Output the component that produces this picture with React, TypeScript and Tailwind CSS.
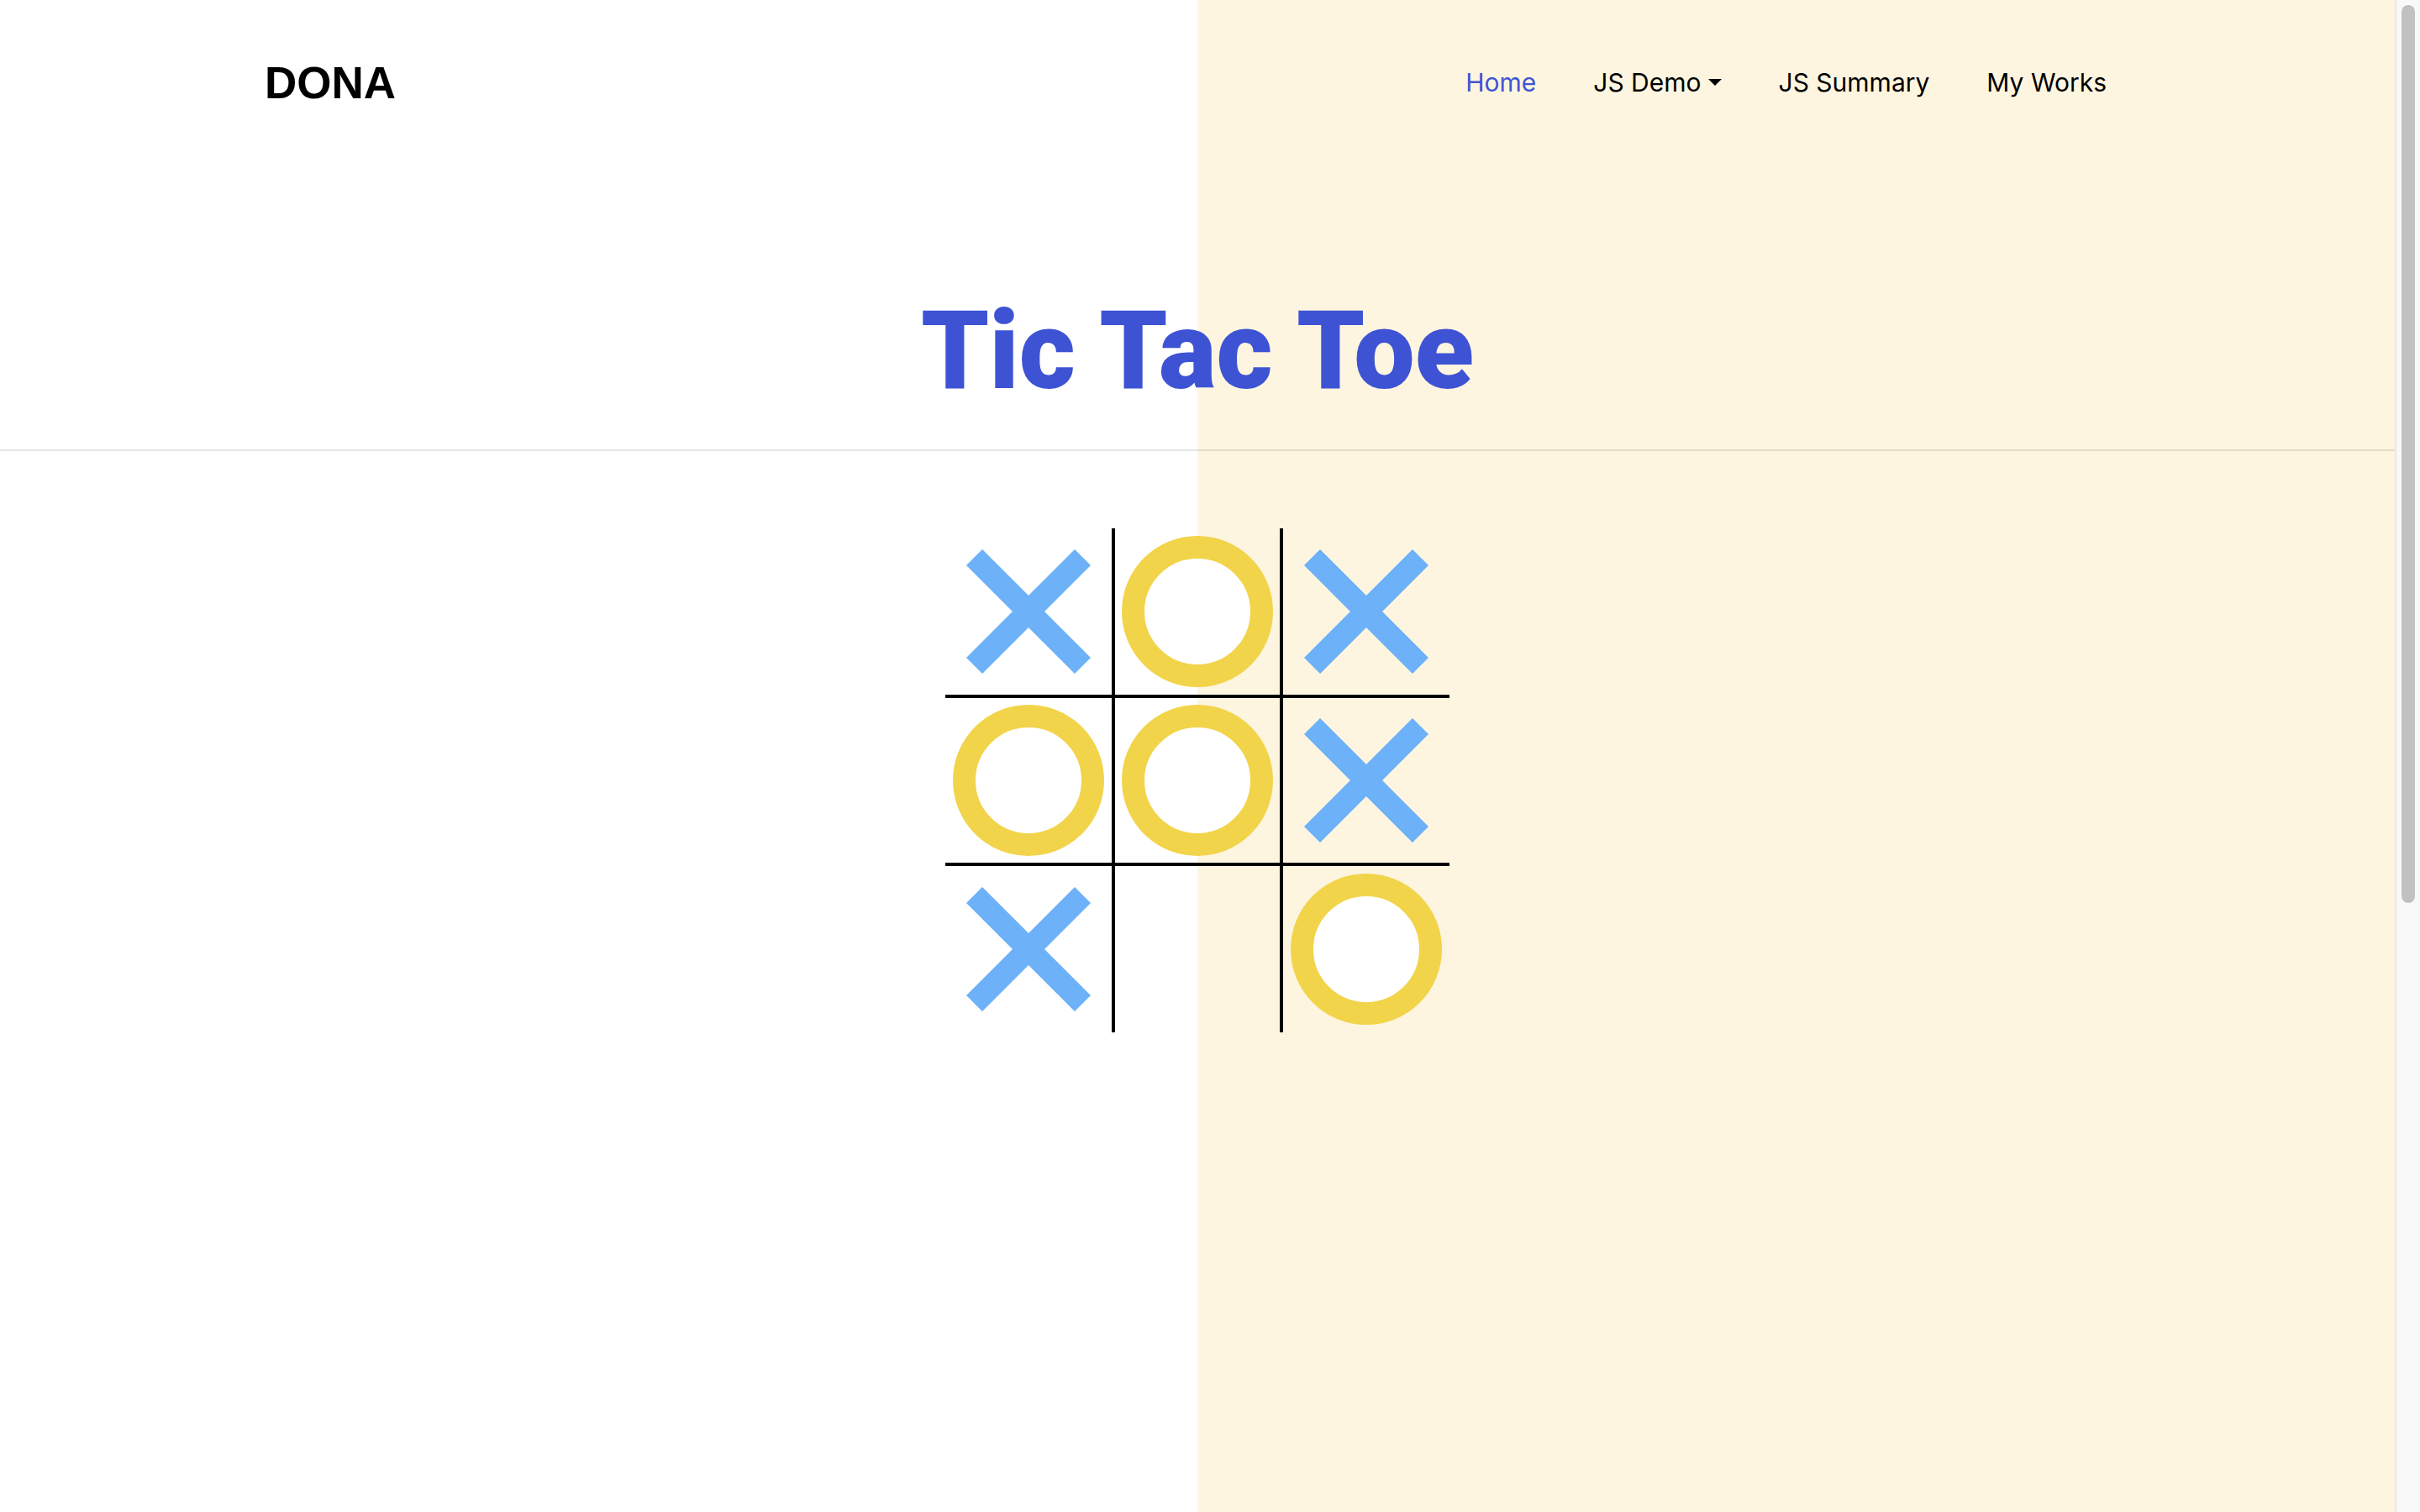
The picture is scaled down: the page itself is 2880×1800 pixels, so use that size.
import React from 'react';

type Mark = 'x' | 'o' | '';

const board: Mark[] = ['x', 'o', 'x', 'o', 'o', 'x', 'x', '', 'o'];
const rowHeights = ['h-[202px]', 'h-[200px]', 'h-[198px]'];

const XMark: React.FC = () => (
  <svg width="148" height="148" viewBox="0 0 148 148" className="block">
    <line x1="9.5" y1="9.5" x2="138.5" y2="138.5" stroke="#6db1f8" strokeWidth="27" />
    <line x1="138.5" y1="9.5" x2="9.5" y2="138.5" stroke="#6db1f8" strokeWidth="27" />
  </svg>
);

const OMark: React.FC = () => (
  <div className="w-[180px] h-[180px] rounded-full border-[27px] border-[#f2d44b] bg-white" />
);

const App: React.FC = () => {
  return (
    <div className="flex h-screen w-full overflow-hidden">
      {/* Page */}
      <div className="w-[2850px] h-full bg-[linear-gradient(to_right,#ffffff_50%,#fdf5df_50%)]">
        {/* Header */}
        <header className="h-[196px] flex items-center justify-between pl-[315px] pr-[343px]">
          <a href="#" className="font-['Liberation_Sans',Arial,sans-serif] font-bold text-[53px] leading-none text-black">
            DONA
          </a>
          <nav className="flex items-center gap-[68px] font-['Inter',sans-serif] text-[30px] leading-none">
            <a href="#" className="text-[#3f54d4]">Home</a>
            <a href="#" className="flex items-center text-black">
              JS Demo
              <span className="ml-[8px] w-0 h-0 border-l-[8px] border-r-[8px] border-t-[8px] border-l-transparent border-r-transparent border-t-black" />
            </a>
            <a href="#" className="text-black">JS Summary</a>
            <a href="#" className="text-black">My Works</a>
          </nav>
        </header>

        {/* Title */}
        <h1 className="mt-[157px] text-center font-['Roboto',sans-serif] font-black text-[129px] leading-none text-[#3e53d4]">
          Tic Tac Toe
        </h1>

        <div className="mt-[53px] border-t-2 border-black/10" />

        {/* Board */}
        <div className="mt-[92px] mx-auto w-[600px] grid grid-cols-[202px_200px_198px]">
          {board.map((mark, i) => {
            const col = i % 3;
            const row = Math.floor(i / 3);
            return (
              <div
                key={i}
                className={`${rowHeights[row]} flex items-center justify-center border-black ${col < 2 ? 'border-r-4' : ''} ${row < 2 ? 'border-b-4' : ''}`}
              >
                {mark === 'x' && <XMark />}
                {mark === 'o' && <OMark />}
              </div>
            );
          })}
        </div>
      </div>

      {/* Scrollbar */}
      <div className="w-[30px] h-full bg-[#f9f9f9] border-l-2 border-[#e8e8e8] pt-[6px] pl-[6px]">
        <div className="w-[16px] h-[1069px] rounded-full bg-[#c1c1c1]" />
      </div>
    </div>
  );
};

export default App;
